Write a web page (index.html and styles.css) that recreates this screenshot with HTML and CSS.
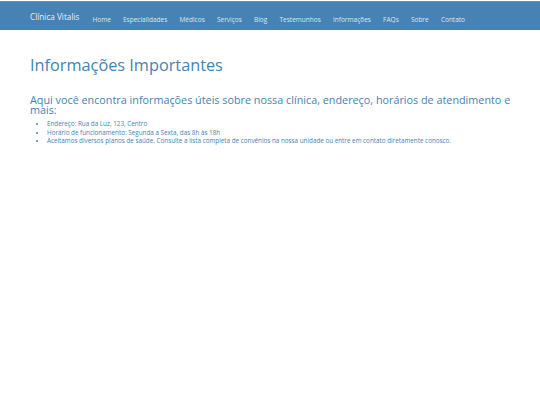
FILE: index.html
```html
<!DOCTYPE html>
<html lang="pt">
<head>
<meta charset="utf-8">
<title>Informações Importantes</title>
<link rel="stylesheet" href="styles.css">
</head>
<body>
<nav class="navbar">
  <a class="brand" href="#">Clínica Vitalis</a>
  <ul class="nav-links">
    <li><a href="#">Home</a></li>
    <li><a href="#">Especialidades</a></li>
    <li><a href="#">Médicos</a></li>
    <li><a href="#">Serviços</a></li>
    <li><a href="#">Blog</a></li>
    <li><a href="#">Testemunhos</a></li>
    <li><a href="#">Informações</a></li>
    <li><a href="#">FAQs</a></li>
    <li><a href="#">Sobre</a></li>
    <li><a href="#">Contato</a></li>
  </ul>
</nav>
<main class="content">
  <h1 class="title">Informações Importantes</h1>
  <h2 class="subtitle">Aqui você encontra informações úteis sobre nossa clínica, endereço, horários de atendimento e mais:</h2>
  <ul class="info-list">
    <li>Endereço: Rua da Luz, 123, Centro</li>
    <li>Horário de funcionamento: Segunda a Sexta, das 8h às 18h</li>
    <li>Aceitamos diversos planos de saúde. Consulte a lista completa de convênios na nossa unidade ou entre em contato diretamente conosco.</li>
  </ul>
</main>
</body>
</html>
```

FILE: styles.css
```css
* { box-sizing: border-box; }
html, body { margin: 0; padding: 0; background: #fff; }
body {
  font-family: "Open Sans", "DejaVu Sans", sans-serif;
  color: #4682b4;
}
.navbar {
  margin-top: 1px;
  height: 29px;
  background: #4682b4;
  display: flex;
  align-items: center;
  padding: 0 30px;
  border-top: 1px solid #5a93c2;
}
.brand {
  color: #e8f0f8;
  text-decoration: none;
  font-size: 8.2px;
  margin-right: 13px;
}
.nav-links {
  list-style: none;
  margin: 0;
  padding: 0;
  display: flex;
  gap: 12.2px;
}
.nav-links a {
  color: #dce8f3;
  text-decoration: none;
  font-size: 6.5px;
}
.content {
  padding: 25px 20px 0 30px;
}
.title {
  font-weight: 400;
  font-size: 16.3px;
  margin: 0 0 20px;
  line-height: 20px;
}
.subtitle {
  font-weight: 400;
  font-size: 10.8px;
  line-height: 10px;
  margin: 0 0 5px;
}
.info-list {
  margin: 0;
  padding-left: 17px;
  font-size: 6.3px;
  line-height: 8.5px;
}
```
